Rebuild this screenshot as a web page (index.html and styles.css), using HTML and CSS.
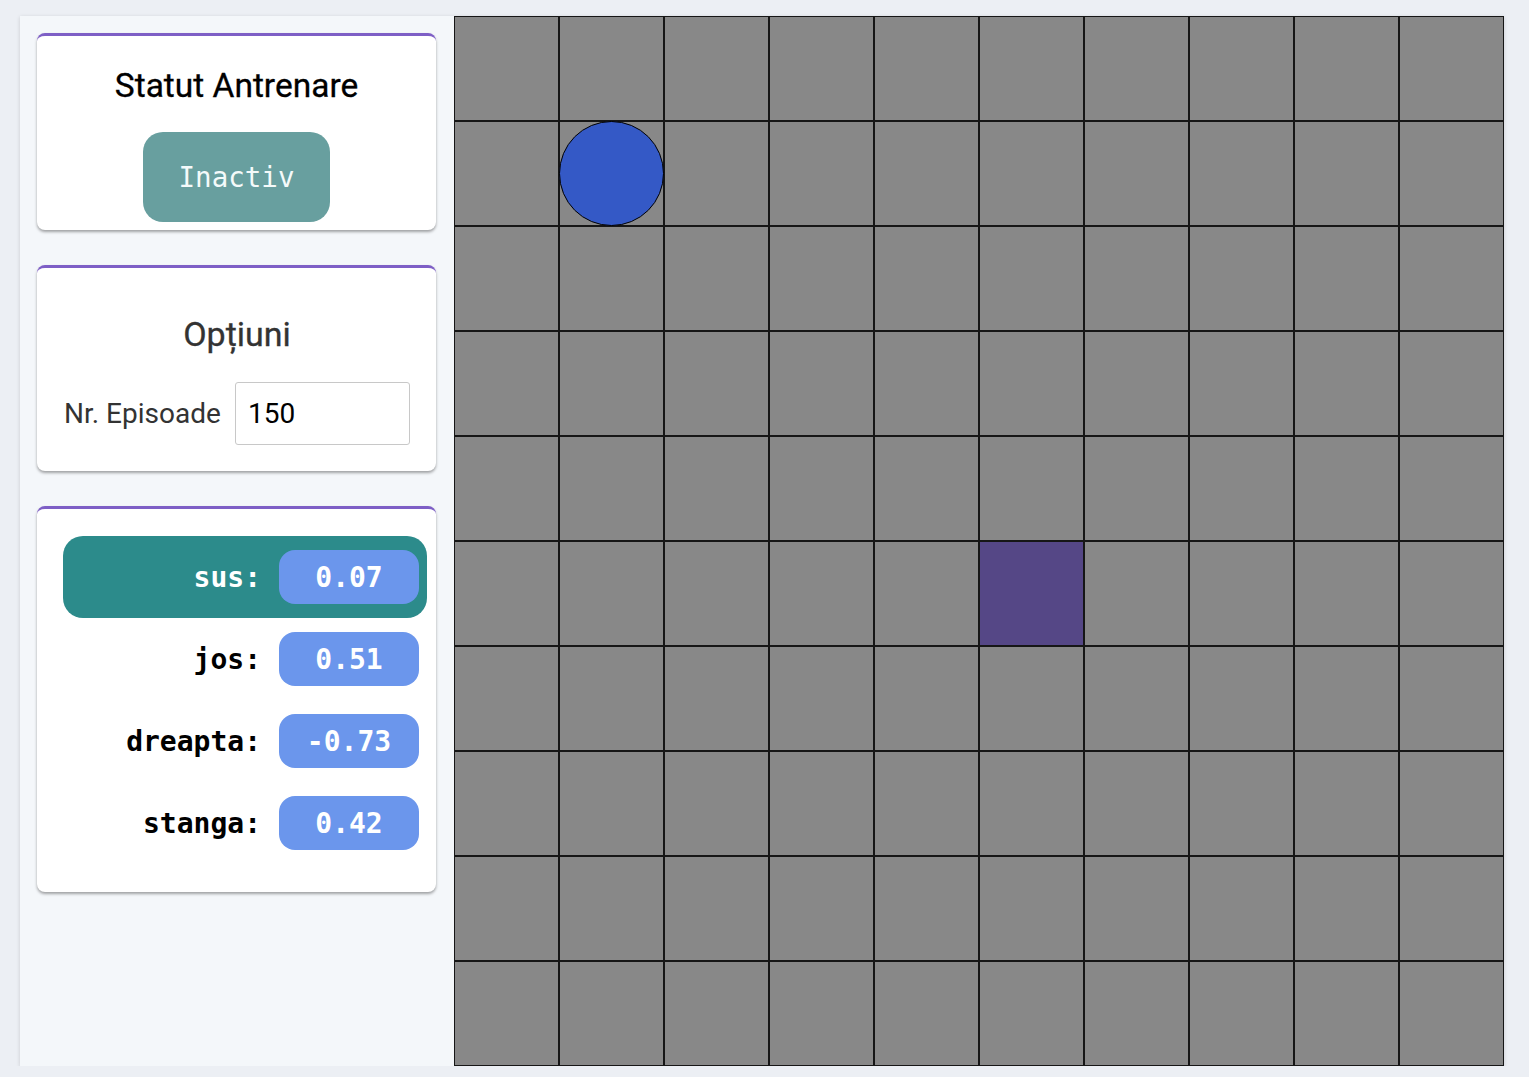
FILE: index.html
```html
<!DOCTYPE html>
<html lang="ro">
<head>
<meta charset="utf-8">
<title>Q-Learning</title>
<link rel="stylesheet" href="styles.css">
</head>
<body>
<div class="app">
  <aside class="sidebar">
    <section class="card status-card">
      <h2 class="card-title">Statut Antrenare</h2>
      <button class="status-btn">Inactiv</button>
    </section>
    <section class="card options-card">
      <h2 class="card-title options-title">Opțiuni</h2>
      <div class="field">
        <label class="field-label" for="ep">Nr. Episoade</label>
        <input class="field-input" id="ep" type="text" value="150">
      </div>
    </section>
    <section class="card q-card">
      <div class="q-row active"><span class="q-label">sus:</span><span class="q-val">0.07</span></div>
      <div class="q-row"><span class="q-label">jos:</span><span class="q-val">0.51</span></div>
      <div class="q-row"><span class="q-label">dreapta:</span><span class="q-val">-0.73</span></div>
      <div class="q-row"><span class="q-label">stanga:</span><span class="q-val">0.42</span></div>
    </section>
  </aside>
  <main class="board">
    <div class="cell"></div><div class="cell"></div><div class="cell"></div><div class="cell"></div><div class="cell"></div><div class="cell"></div><div class="cell"></div><div class="cell"></div><div class="cell"></div><div class="cell"></div>
    <div class="cell"></div><div class="cell"><div class="agent"></div></div><div class="cell"></div><div class="cell"></div><div class="cell"></div><div class="cell"></div><div class="cell"></div><div class="cell"></div><div class="cell"></div><div class="cell"></div>
    <div class="cell"></div><div class="cell"></div><div class="cell"></div><div class="cell"></div><div class="cell"></div><div class="cell"></div><div class="cell"></div><div class="cell"></div><div class="cell"></div><div class="cell"></div>
    <div class="cell"></div><div class="cell"></div><div class="cell"></div><div class="cell"></div><div class="cell"></div><div class="cell"></div><div class="cell"></div><div class="cell"></div><div class="cell"></div><div class="cell"></div>
    <div class="cell"></div><div class="cell"></div><div class="cell"></div><div class="cell"></div><div class="cell"></div><div class="cell"></div><div class="cell"></div><div class="cell"></div><div class="cell"></div><div class="cell"></div>
    <div class="cell"></div><div class="cell"></div><div class="cell"></div><div class="cell"></div><div class="cell"></div><div class="cell goal"></div><div class="cell"></div><div class="cell"></div><div class="cell"></div><div class="cell"></div>
    <div class="cell"></div><div class="cell"></div><div class="cell"></div><div class="cell"></div><div class="cell"></div><div class="cell"></div><div class="cell"></div><div class="cell"></div><div class="cell"></div><div class="cell"></div>
    <div class="cell"></div><div class="cell"></div><div class="cell"></div><div class="cell"></div><div class="cell"></div><div class="cell"></div><div class="cell"></div><div class="cell"></div><div class="cell"></div><div class="cell"></div>
    <div class="cell"></div><div class="cell"></div><div class="cell"></div><div class="cell"></div><div class="cell"></div><div class="cell"></div><div class="cell"></div><div class="cell"></div><div class="cell"></div><div class="cell"></div>
    <div class="cell"></div><div class="cell"></div><div class="cell"></div><div class="cell"></div><div class="cell"></div><div class="cell"></div><div class="cell"></div><div class="cell"></div><div class="cell"></div><div class="cell"></div>
  </main>
</div>
</body>
</html>
```
FILE: styles.css
```css
* { box-sizing: border-box; }
html, body { margin: 0; padding: 0; }
body {
  background: #eceff4;
  font-family: Roboto, "Liberation Sans", sans-serif;
  padding: 16px 0 0 20px;
}
.app {
  display: flex;
  width: 1484px;
  height: 1050px;
  background: #f4f7fa;
  box-shadow: 0 1px 4px rgba(0,0,0,0.15);
}
.sidebar {
  width: 434px;
  flex: none;
  padding: 17px 18px 0 17px;
  display: flex;
  flex-direction: column;
  gap: 35px;
}
.card {
  background: #fff;
  border-top: 3px solid #7e5fc6;
  border-radius: 8px;
  box-shadow: 0 2px 3px rgba(0,0,0,0.35);
}
.status-card {
  height: 197px;
  display: flex;
  flex-direction: column;
  align-items: center;
  padding-top: 31px;
}
.card-title {
  margin: 0;
  font-size: 33.5px;
  font-weight: 400;
  line-height: 38px;
  color: #000;
  text-align: center;
  -webkit-text-stroke: 0.3px currentColor;
}
.status-btn {
  margin-top: 27px;
  width: 187px;
  height: 90px;
  border: none;
  border-radius: 20px;
  background: #689f9f;
  color: #f4fafa;
  font-family: "DejaVu Sans Mono", "Liberation Mono", monospace;
  font-size: 27.5px;
  padding: 0;
}
.options-card {
  height: 206px;
  padding: 47px 26px 0 27px;
}
.options-title {
  color: #333;
  font-size: 34px;
}
.field {
  margin-top: 29px;
  display: flex;
  align-items: center;
  justify-content: space-between;
}
.field-label {
  font-size: 28px;
  color: #333;
}
.field-input {
  width: 175px;
  height: 63px;
  border: 1px solid #c8c8c8;
  border-radius: 3px;
  font-family: Roboto, "Liberation Sans", sans-serif;
  font-size: 28px;
  color: #000;
  padding: 0 12px;
  outline: none;
}
.q-card {
  height: 386px;
  padding: 27px 9px 0 26px;
  display: flex;
  flex-direction: column;
}
.q-row {
  height: 82px;
  display: flex;
  align-items: center;
  justify-content: flex-end;
  gap: 18px;
  padding-right: 8px;
  border-radius: 20px;
  font-family: "DejaVu Sans Mono", "Liberation Mono", monospace;
  font-weight: 700;
  font-size: 28px;
}
.q-row.active { background: #2c8b8b; }
.q-row.active .q-label { color: #fff; }
.q-label { color: #000; }
.q-val {
  width: 140px;
  height: 54px;
  border-radius: 16px;
  background: #6b96ec;
  color: #fff;
  display: flex;
  align-items: center;
  justify-content: center;
}
.board {
  width: 1050px;
  height: 1050px;
  display: grid;
  grid-template-columns: repeat(10, 105px);
  grid-template-rows: repeat(10, 105px);
  background: #888;
}
.cell {
  border: 1px solid #161616;
  background: #888888;
}
.cell.goal { background: #554786; }
.agent {
  width: 105px;
  height: 105px;
  margin: -1px;
  border-radius: 50%;
  background: #3459c6;
  border: 1.5px solid #000;
}
```
